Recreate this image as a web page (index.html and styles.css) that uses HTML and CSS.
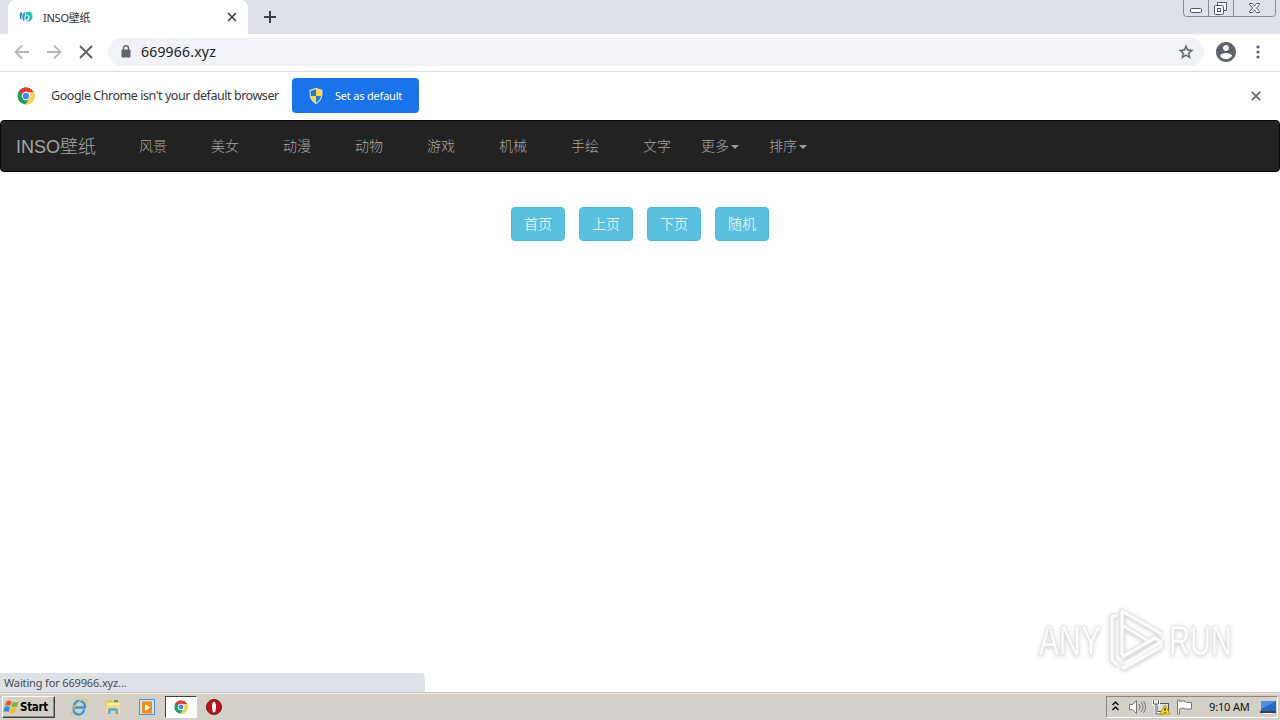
FILE: index.html
```html
<!DOCTYPE html>
<html lang="zh">
<head>
<meta charset="utf-8">
<title>INSO壁纸</title>
<link rel="stylesheet" href="styles.css">
</head>
<body>
<div class="screen">
  <header class="tabstrip">
    <div class="tab">
      <svg class="favicon" width="14" height="12" viewBox="0 0 14 12"><path d="M3.500 1Q0 1.500.8 5.500 1 8 2.500 9 2 4 3.500 1z" fill="#1671b8"/><path d="M7 .5Q3 2 3.300 6q0 3 2 4.500Q5.500 8 5.500 6 5.500 3 7 .5z" fill="#179bb5"/><path d="M7.500 1.300q5.500-2 6 3.700.3 5.500-7 6 4.500-2.500 4-5Q10 3.500 7 4.500 6.500 2.500 7.500 1.300z" fill="#27c2b5"/><path d="M6.500 5.500q1-.8 3 0Q9 8.500 6.500 9z" fill="#1f9ed0"/></svg>
      <span class="tab-title">INSO壁纸</span>
      <svg class="tab-close" width="10" height="10" viewBox="0 0 10 10"><path d="M1 1l8 8M9 1L1 9" stroke="#3c4043" stroke-width="1.7"/></svg>
    </div>
    <svg class="tab-new" width="12" height="12" viewBox="0 0 12 12"><path d="M6 0v12M0 6h12" stroke="#3c4043" stroke-width="2"/></svg>
    <div class="window-controls">
      <svg width="93" height="17" viewBox="0 0 93 17" fill="none"><path d="M.5 0v13.500q0 3 3 3h86q3 0 3-3V0M25.500 0v16M50.500 0v16" stroke="#858a93"/><g stroke="#4f5663"><rect x="7.500" y="8.500" width="11" height="4" rx="1" fill="#fff"/><path d="M34.500 5.500v-3h9v8h-3" fill="#f4f5f7"/><rect x="31.500" y="5.500" width="9" height="9" rx="1" fill="#fff"/><rect x="34.500" y="8.500" width="3" height="3"/><path d="M66.500 3.500h3l2 2.500 2-2.500h3v1l-3 3.500 3 3.500v1h-3l-2-2.500-2 2.500h-3v-1l3-3.500-3-3.500z" fill="#fff"/></g></svg>
    </div>
  </header>
  <div class="toolbar">
    <svg class="nav-icons" width="80" height="16" viewBox="0 0 80 16" fill="none"><path d="M15 8H2M8 1.500L1.500 8 8 14.500M33 8h13M40 1.500L46.500 8 40 14.500" stroke="#b5b7ba" stroke-width="1.800"/><path d="M66 2l12 12M78 2L66 14" stroke="#5f6368" stroke-width="1.900"/></svg>
    <div class="omnibox">
      <svg width="10" height="13" viewBox="0 0 10 13"><rect x=".5" y="4.500" width="9" height="8" rx="1" fill="#5f6368"/><path d="M2.500 5V3.300a2.500 2.500 0 015 0V5" fill="none" stroke="#5f6368" stroke-width="1.400"/></svg>
      <span class="url">669966.xyz</span>
      <svg class="star" width="16" height="16" viewBox="1 1 22 22"><path fill="#5f6368" stroke="#5f6368" stroke-width=".5" d="M22 9.240l-7.190-.62L12 2 9.190 8.630 2 9.240l5.460 4.730L5.820 21 12 17.270 18.180 21l-1.630-7.030L22 9.240zM12 15.400l-3.760 2.270 1-4.280-3.320-2.880 4.380-.38L12 6.100l1.710 4.040 4.380.38-3.320 2.880 1 4.280L12 15.400z"/></svg>
    </div>
    <svg class="avatar" width="20" height="20" viewBox="2 2 20 20"><path fill="#5f6368" d="M12 2C6.480 2 2 6.480 2 12s4.480 10 10 10 10-4.480 10-10S17.520 2 12 2zm0 3c1.660 0 3 1.340 3 3s-1.340 3-3 3-3-1.340-3-3 1.340-3 3-3zm0 14.200c-2.500 0-4.710-1.280-6-3.220.03-1.990 4-3.080 6-3.080s5.970 1.090 6 3.080c-1.290 1.940-3.500 3.220-6 3.220z"/></svg>
    <svg class="kebab" width="4" height="14" viewBox="0 0 4 14" fill="#5f6368"><circle cx="2" cy="2" r="1.600"/><circle cx="2" cy="7" r="1.600"/><circle cx="2" cy="12" r="1.600"/></svg>
  </div>
  <div class="infobar">
    <svg class="chrome" width="18" height="18" viewBox="0 0 18 18"><circle cx="9" cy="9" r="8.500" fill="#1fa15d"/><path d="M9 9L1.640 4.750A8.500 8.500 0 0116.360 4.750z" fill="#de3b30"/><path d="M9 5h7.500A8.500 8.500 0 018.500 17.500L12.500 11z" fill="#fcd04b"/><circle cx="9" cy="9" r="4.200" fill="#fff"/><circle cx="9" cy="9" r="3.200" fill="#4285f4"/></svg>
    <span class="infobar-text">Google Chrome isn't your default browser</span>
    <div class="default-button">
      <svg width="14" height="16" viewBox="0 0 14 16"><path d="M7 .5l6 2c0 6-.5 10-6 13C1.500 12.500 1 8.500 1 2.500z" fill="#ffd83c"/><path d="M7 1v7H1.300L1 2.800zM7 8h5.500c-.8 4-2.500 5.500-5.500 7z" fill="#287bd1"/><path d="M7 .5l6 2c0 6-.5 10-6 13C1.500 12.500 1 8.500 1 2.500z" fill="none" stroke="#d8dde0" stroke-width="1.200"/></svg>
      <span>Set as default</span>
    </div>
    <svg class="infobar-close" width="10" height="10" viewBox="0 0 10 10"><path d="M.8.8l8.400 8.400M9.200.8L.8 9.200" stroke="#686b70" stroke-width="1.900"/></svg>
  </div>
  <main class="page">
    <nav class="navbar">
      <span class="brand">INSO壁纸</span>
      <span class="link">风景</span><span class="link">美女</span><span class="link">动漫</span><span class="link">动物</span><span class="link">游戏</span><span class="link">机械</span><span class="link">手绘</span><span class="link">文字</span>
      <span class="drop">更多<i class="caret"></i></span><span class="drop">排序<i class="caret"></i></span>
    </nav>
    <div class="pager"><span class="btn">首页</span><span class="btn">上页</span><span class="btn">下页</span><span class="btn">随机</span></div>
    <div class="status"><span>Waiting for 669966.xyz...</span></div>
  </main>
  <footer class="taskbar">
    <div class="start">
      <svg width="17" height="16" viewBox="0 0 17 16"><path d="M3.500 2.500Q6 .5 8.500 2.200L7.200 7Q4.500 5.500 2 7z" fill="#e9542b"/><path d="M9.500 2.700q3 1.500 6 0L14 7.500q-3 1.500-5.700 0z" fill="#79b82e"/><path d="M1.700 8Q4.500 6.500 7 8l-1.400 5Q3 11.500.3 13z" fill="#348ed1"/><path d="M8 8.500q2.700 1.500 5.700 0l-1.500 5q-3 1.500-5.600 0z" fill="#f8bd20"/></svg>
      <span>Start</span>
    </div>
    <svg class="task-ie" width="18" height="18" viewBox="0 0 18 18" fill="none"><path d="M14 11.500A5.300 5.300 0 113.700 9.500h11.200A5.300 5.300 0 004 7.500" stroke="#3794d6" stroke-width="2.300"/><path d="M2.500 16.500C-1.500 14 10-.5 16 1.500c1.500.8.800 2.500 0 4" stroke="#e2bd50" stroke-width="1.200"/></svg>
    <svg class="task-folder" width="18" height="18" viewBox="0 0 18 18"><path d="M2 2h6l1 2h6v11H2z" fill="#e8c85e"/><path d="M3 5h13v5H3z" fill="#fff0a7"/><path d="M2 7h14v8H2z" fill="#f3db83"/><path d="M4 16v-4q0-2 2-2h6q2 0 2 2v4h-2.500v-3h-5v3z" fill="#62acd4"/><path d="M10 3h4" stroke="#55a55b" stroke-width="2"/></svg>
    <svg class="task-media" width="16" height="17" viewBox="0 0 16 17"><rect x=".5" y=".5" width="15" height="15" fill="#c7e4f8" stroke="#4d95c9"/><rect x="3" y="2.500" width="10" height="12" rx="1" fill="#f18b19"/><path d="M6 5v7l5-3.500z" fill="#fff"/></svg>
    <div class="task-active"><svg width="14" height="14" viewBox="0 0 18 18"><circle cx="9" cy="9" r="8.500" fill="#1fa15d"/><path d="M9 9L1.640 4.750A8.500 8.500 0 0116.360 4.750z" fill="#de3b30"/><path d="M9 5h7.500A8.500 8.500 0 018.500 17.500L12.500 11z" fill="#fcd04b"/><circle cx="9" cy="9" r="4.200" fill="#fff"/><circle cx="9" cy="9" r="3.200" fill="#4285f4"/></svg></div>
    <svg class="task-opera" width="16" height="16" viewBox="0 0 16 16"><circle cx="8" cy="8" r="7.500" fill="#b81519" stroke="#791116"/><ellipse cx="8" cy="8" rx="2" ry="5.500" fill="#fff"/></svg>
    <div class="tray">
      <svg width="90" height="18" viewBox="0 0 90 18" fill="none"><path d="M2.500 7l3-3 3 3M2.500 12l3-3 3 3" stroke="#111" stroke-width="1.500"/><path d="M19.500 6.500h3l4-4v13l-4-4h-3z" fill="#fff" stroke="#777"/><path d="M29 6q2 3 0 6M31 4q4 5 0 10M33.500 3q4 6 0 12" stroke="#777"/><rect x="47.500" y="5.500" width="11" height="8" fill="#ddd" stroke="#555"/><path d="M43.500 2v4h5V2M46 6v10M46 15.500h8" stroke="#fff" stroke-width="2.800"/><path d="M43.500 2v4h5V2M46 6v10h9" stroke="#555"/><path d="M55 7l5 9H50z" fill="#ffdc20" stroke="#be9700"/><path d="M55 10v3M55 14v1" stroke="#222" stroke-width="1.200"/><path d="M67.500 2v14h2V11q3-2 6 0h6V4.500h-5q-3-3-7-1V2z" fill="#fff" stroke="#777"/></svg>
      <span class="clock">9:10 AM</span>
      <svg class="monitor" width="16" height="15" viewBox="0 0 16 15"><path d="M1 1h15v10H1z" fill="#236bc2"/><path d="M1 1h15L1 9z" fill="#4d92dd"/><path d="M0 11h16v2H0z" fill="#3a444e"/><path d="M3 13.500h9" stroke="#eee"/></svg>
    </div>
  </footer>
  <svg class="watermark" width="220" height="76" viewBox="0 0 220 76">
    <g fill="#fff" stroke="#e6e6e6" stroke-width=".8" class="mark-letters"><text x="9" y="53" textLength="62" lengthAdjust="spacingAndGlyphs">ANY</text><text x="139" y="53" textLength="63" lengthAdjust="spacingAndGlyphs">RUN</text></g>
    <g fill="none" stroke-linejoin="round"><path d="M87 14h-5v44l6 5M92 53V9l40 23M92 23l28 17M92 55l33-19 6 4-37 22M92 64l2 2 37-21v-7" stroke="#dedede" stroke-width="4.800"/><path d="M87 14h-5v44l6 5M92 53V9l40 23M92 23l28 17M92 55l33-19 6 4-37 22M92 64l2 2 37-21v-7" stroke="#fbfbfb" stroke-width="3.200"/></g>
  </svg>
</div>
</body>
</html>
```
FILE: styles.css
```css
* { box-sizing: border-box; }
body { margin: 0; background: #fff; font-family: "Noto Sans", "Noto Sans CJK SC", sans-serif; }
svg { display: block; flex: none; }
span { white-space: nowrap; }
.screen { position: relative; width: 1280px; height: 720px; overflow: hidden; display: flex; flex-direction: column; }
.tabstrip { height: 34px; flex: none; background: #dee1e8; display: flex; padding-left: 8px; }
.tab { width: 240px; background: #fff; border-radius: 8px 8px 0 0; display: flex; align-items: center; padding: 0 11px 0 11px; }
.tab-title { font-size: 11px; letter-spacing: -.25px; color: #303235; margin-left: 10px; padding-bottom: 1px; }
.tab-close { margin-left: auto; }
.tab-new { margin: 11px 0 0 16px; }
.window-controls { margin-left: auto; padding-right: 4px; }
.toolbar { height: 38px; flex: none; border-bottom: 1px solid #dcdde0; display: flex; align-items: center; padding: 0 20px 2px 14px; }
.omnibox { width: 1096px; height: 28px; margin: 0 12px 0 14px; border-radius: 14px; background: #f0f2f5; display: flex; align-items: center; padding: 0 10px 0 13px; }
.url { font-size: 14px; color: #202124; margin-left: 10px; letter-spacing: .2px; }
.star { margin-left: auto; }
.kebab { margin-left: auto; }
.infobar { height: 48px; flex: none; display: flex; align-items: center; padding: 0 19px 1px 17px; }
.infobar-text { width: 241px; margin-left: 16px; font-size: 12.500px; letter-spacing: -.45px; color: #333639; }
.default-button { width: 127px; height: 35px; border-radius: 4px; background: #1a73e8; color: #fff; display: flex; align-items: center; padding-left: 17px; gap: 12px; font-size: 11px; letter-spacing: -.2px; }
.infobar-close { margin-left: auto; }
.page { flex: 1; display: flex; flex-direction: column; align-items: center; }
.navbar { width: 100%; height: 52px; flex: none; background: #222; border: 1px solid #080808; border-radius: 4px; display: flex; align-items: center; color: #a6a6a6; font: 300 14px "Liberation Sans", "Noto Sans CJK SC", sans-serif; padding: 0 0 2px 15px; }
.brand { width: 101px; font-size: 18px; padding-bottom: 1px; }
.link { width: 72px; text-align: center; }
.drop { width: 68px; padding-left: 8px; display: flex; align-items: center; }
.caret { width: 0; height: 0; margin: 4px 0 0 2px; border: 4px solid transparent; border-top-color: #9d9d9d; border-bottom: 0; }
.pager { display: flex; gap: 14px; margin-top: 35px; }
.btn { width: 54px; height: 34px; border: 1px solid #46b8da; border-radius: 4px; background: #5bc0de; color: #fff; font: 300 14px/32px "Liberation Sans", "Noto Sans CJK SC", sans-serif; text-align: center; }
.status { width: 425px; height: 19px; margin-top: auto; align-self: flex-start; background: #dee1e8; border-top-right-radius: 4px; padding-left: 4px; font-size: 11px; line-height: 20px; letter-spacing: -.15px; color: #484b50; }
.taskbar { height: 28px; flex: none; background: #d4d0c8; border-top: 1px solid #c9c6b9; box-shadow: inset 0 1px #efede6; display: flex; align-items: center; padding: 1px 2px 0; }
.start { width: 53px; height: 22px; border: 1px solid; border-color: #fff #404040 #404040 #fff; box-shadow: inset -1px -1px #8e8b85; display: flex; align-items: center; font: bold 11.500px "DejaVu Sans Condensed", "DejaVu Sans", sans-serif; letter-spacing: -.3px; color: #000; }
.task-ie { margin-left: 15px; }
.task-folder { margin-left: 16px; }
.task-media { margin-left: 17px; }
.task-active { width: 32px; height: 22px; margin-left: 10px; background: #fff; border: 1px solid; border-color: #404040 #fff #fff #404040; display: flex; align-items: center; justify-content: center; }
.task-opera { margin-left: 9px; }
.tray { width: 172px; height: 22px; margin-left: auto; border: 1px solid; border-color: #8b8780 #fff #fff #8b8780; display: flex; align-items: center; padding-left: 3px; }
.clock { width: 51px; margin-left: 9px; font-size: 11px; letter-spacing: -.15px; color: #111; padding-bottom: 1px; }
.watermark { position: absolute; left: 1030px; top: 602px; filter: drop-shadow(0 1px 2px #0003); }
.mark-letters { font: 43px "Liberation Sans", sans-serif; }
```
